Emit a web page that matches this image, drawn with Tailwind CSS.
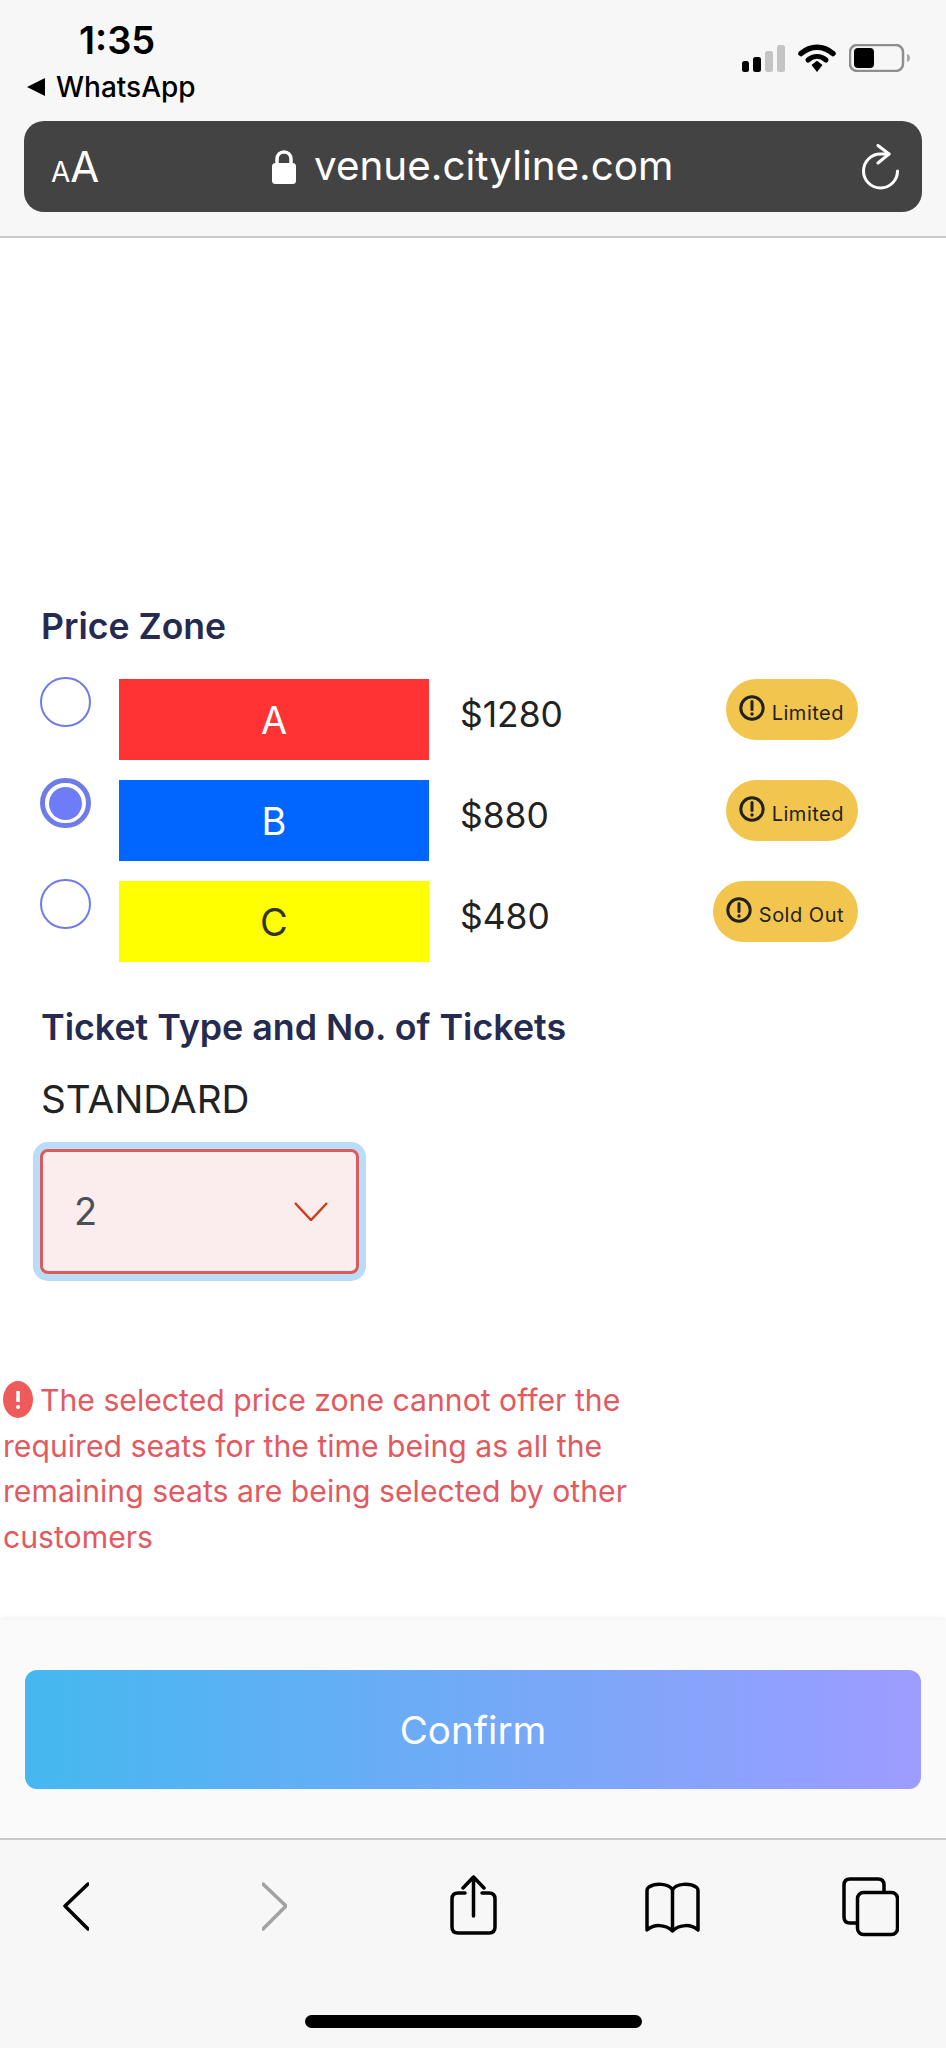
<!DOCTYPE html>
<html lang="en">
<head>
  <meta charset="UTF-8" />
  <title>Cityline</title>
  <script src="https://cdn.jsdelivr.net/npm/@tailwindcss/browser@4"></script>
</head>
<body class="bg-white text-[#222] font-['Inter',sans-serif]">
  <div class="w-[946px] h-[2048px] flex flex-col overflow-hidden">

    <!-- status bar + url bar -->
    <header class="h-[238px] shrink-0 bg-[#f7f7f7] border-b-2 border-[#c9c9c9]">
      <div class="h-[121px] flex justify-between">
        <div class="pt-[21px]">
          <div class="pl-[79px] text-[38px] leading-[38px] font-semibold text-black">1:35</div>
          <div class="mt-[14px] pl-[27px] flex items-center gap-[11px] h-[28px]">
            <svg width="18" height="18" viewBox="0 0 18 18"><path d="M18 0V18L0 9Z" fill="#000"/></svg>
            <span class="text-[28px] leading-[28px] font-medium text-black">WhatsApp</span>
          </div>
        </div>
        <div class="pt-[44px] pr-[36px] flex items-start gap-[13px]">
          <svg width="43" height="28" viewBox="0 0 43 28">
            <rect x="0" y="17" width="7" height="11" rx="2.500" fill="#000"/>
            <rect x="11" y="13" width="8" height="15" rx="2.500" fill="#000"/>
            <rect x="23" y="7" width="8" height="21" rx="2.500" fill="#c4c4c4"/>
            <rect x="35" y="1" width="8" height="27" rx="2.500" fill="#c4c4c4"/>
          </svg>
          <svg width="38" height="28" viewBox="0 0 38 28">
            <path d="M3 9.5C12.5 1 25.5 1 35 9.5" fill="none" stroke="#000" stroke-width="5.5" stroke-linecap="round"/>
            <path d="M10 16C15.5 11.2 22.5 11.2 28 16" fill="none" stroke="#000" stroke-width="5" stroke-linecap="round"/>
            <path d="M13.5 21 19 16.8 24.500 21 19 28Z" fill="#000"/>
          </svg>
          <svg width="61" height="28" viewBox="0 0 61 28">
            <rect x="1" y="1" width="53" height="26" rx="7" fill="none" stroke="#8e8e8e" stroke-width="2.500"/>
            <rect x="5" y="4" width="20" height="20" rx="4" fill="#000"/>
            <path d="M58 10C60 10.500 61 12 61 14C61 16 60 17.500 58 18Z" fill="#a8a8a8"/>
          </svg>
        </div>
      </div>
      <div class="mx-[24px] h-[91px] rounded-[20px] bg-[#434343] flex items-center relative text-white">
        <div class="w-[248px] pl-[27px] flex items-baseline">
          <span class="text-[28px] leading-none">A</span><span class="text-[42px] leading-none">A</span>
        </div>
        <svg width="24" height="34" viewBox="0 0 24 34">
          <path d="M5 15V9.500C5 5 8 2 12 2C16 2 19 5 19 9.500V15" fill="none" stroke="#fff" stroke-width="3.500"/>
          <rect x="0" y="13" width="24" height="21" rx="3.500" fill="#fff"/>
        </svg>
        <span class="ml-[18px] text-[40.400px] leading-none">venue.cityline.com</span>
        <svg class="absolute right-[23px] top-[23px]" width="38" height="46" viewBox="0 0 38 46">
          <path d="M28 10H19.500A17 17 0 1 0 36.500 27" fill="none" stroke="#fff" stroke-width="3" stroke-linecap="round"/>
          <path d="M17 1.500 28 10 17 19" fill="none" stroke="#fff" stroke-width="3" stroke-linecap="round" stroke-linejoin="round"/>
        </svg>
      </div>
    </header>

    <main class="flex-1 pt-[369px]">
      <h2 class="pl-[41px] text-[35.600px] leading-[40px] font-semibold text-[#252b50]">Price Zone</h2>

      <div class="mt-[32px] flex flex-col gap-[20px]">
        <div class="h-[81px] flex items-start pl-[40px]">
          <span class="mt-[-2px] w-[51px] h-[50px] shrink-0 rounded-full border-[2.5px] border-[#6f7ce8]"></span>
          <div class="ml-[28px] w-[310px] h-[81px] pt-[2px] bg-[#ff3333] text-white text-[38px] flex items-center justify-center">A</div>
          <div class="ml-[31px] h-[72px] flex items-center text-[35.400px]">$1280</div>
          <div class="ml-auto mr-[88px] h-[61px] pl-[13px] pr-[14px] rounded-full bg-[#f2c64e] flex items-center gap-[7px]">
            <svg class="mt-[-3px]" width="26" height="26" viewBox="0 0 26 26"><circle cx="13" cy="13" r="11.200" fill="none" stroke="#222" stroke-width="3"/><path d="M13 6.500V14.500" stroke="#222" stroke-width="3" stroke-linecap="round"/><circle cx="13" cy="19" r="1.700" fill="#222"/></svg>
            <span class="mt-[7px] text-[20px] tracking-[0.5px]">Limited</span>
          </div>
        </div>

        <div class="h-[81px] flex items-start pl-[40px]">
          <span class="mt-[-2px] w-[51px] h-[50px] shrink-0 rounded-full border-[5px] border-[#6f7ce8] flex items-center justify-center"><span class="w-[33px] h-[33px] rounded-full bg-[#6f7cf8]"></span></span>
          <div class="ml-[28px] w-[310px] h-[81px] pt-[2px] bg-[#0066ff] text-white text-[38px] flex items-center justify-center">B</div>
          <div class="ml-[31px] h-[72px] flex items-center text-[35.400px]">$880</div>
          <div class="ml-auto mr-[88px] h-[61px] pl-[13px] pr-[14px] rounded-full bg-[#f2c64e] flex items-center gap-[7px]">
            <svg class="mt-[-3px]" width="26" height="26" viewBox="0 0 26 26"><circle cx="13" cy="13" r="11.200" fill="none" stroke="#222" stroke-width="3"/><path d="M13 6.500V14.500" stroke="#222" stroke-width="3" stroke-linecap="round"/><circle cx="13" cy="19" r="1.700" fill="#222"/></svg>
            <span class="mt-[7px] text-[20px] tracking-[0.5px]">Limited</span>
          </div>
        </div>

        <div class="h-[81px] flex items-start pl-[40px]">
          <span class="mt-[-2px] w-[51px] h-[50px] shrink-0 rounded-full border-[2.5px] border-[#6f7ce8]"></span>
          <div class="ml-[28px] w-[310px] h-[81px] pt-[2px] bg-[#ffff00] text-[#333] text-[38px] flex items-center justify-center">C</div>
          <div class="ml-[31px] h-[72px] flex items-center text-[35.400px]">$480</div>
          <div class="ml-auto mr-[88px] h-[61px] pl-[13px] pr-[14px] rounded-full bg-[#f2c64e] flex items-center gap-[7px]">
            <svg class="mt-[-3px]" width="26" height="26" viewBox="0 0 26 26"><circle cx="13" cy="13" r="11.200" fill="none" stroke="#222" stroke-width="3"/><path d="M13 6.500V14.500" stroke="#222" stroke-width="3" stroke-linecap="round"/><circle cx="13" cy="19" r="1.700" fill="#222"/></svg>
            <span class="mt-[7px] text-[20px] tracking-[0.5px]">Sold Out</span>
          </div>
        </div>
      </div>

      <h2 class="mt-[45px] pl-[41px] text-[35.800px] leading-[40px] font-semibold text-[#252b50]">Ticket Type and No. of Tickets</h2>
      <p class="mt-[30px] pl-[41px] text-[38.700px] leading-[44px] text-[#222]">STANDARD</p>

      <div class="mt-[28px] ml-[40px] w-[319px] h-[125px] rounded-[8px] border-[3px] border-[#d95c5c] bg-[#fbeded] ring-[7px] ring-[#bbdcf9] flex items-center justify-between pl-[31px] pr-[28px]">
        <span class="text-[38px] text-[#4b4f56]">2</span>
        <svg width="34" height="19" viewBox="0 0 34 19"><path d="M1 1 17 18 33 1" fill="none" stroke="#c9401a" stroke-width="2.500"/></svg>
      </div>

      <p class="mt-[104px] pl-[3px] w-[640px] text-[30.200px] leading-[45.500px] text-[#e25a60]">
        <svg class="inline align-[-7px] mr-[7px]" width="30" height="37" viewBox="0 0 30 37"><ellipse cx="15" cy="18.500" rx="15" ry="18.500" fill="#ef5b5b"/><path d="M15 10V21" stroke="#fff" stroke-width="3.500"/><circle cx="15" cy="26" r="2" fill="#fff"/></svg>The selected price zone cannot offer the required seats for the time being as all the remaining seats are being selected by other customers
      </p>
    </main>

    <!-- confirm -->
    <section class="h-[218px] shrink-0 bg-[#fafafa] shadow-[0_-2px_5px_rgba(0,0,0,0.06)] px-[25px] pt-[50px]">
      <button class="w-full h-[119px] pt-[2px] rounded-[12px] bg-linear-to-r/srgb from-[#45b8f0] to-[#9e9cff] text-white text-[38.600px]">Confirm</button>
    </section>

    <!-- safari toolbar -->
    <nav class="h-[210px] shrink-0 bg-[#f7f7f7] border-t-2 border-[#c9c9c9] pt-[35px] relative">
      <div class="flex items-start">
        <svg class="ml-[63px]" width="26" height="62" viewBox="0 0 26 62"><path d="M25 9 2 31 25 54" fill="none" stroke="#000" stroke-width="3.500" stroke-linecap="round" stroke-linejoin="round"/></svg>
        <svg class="ml-[173px]" width="25" height="62" viewBox="0 0 25 62"><path d="M1 9 24 31 1 54" fill="none" stroke="#a2a2a2" stroke-width="3.500" stroke-linecap="round" stroke-linejoin="round"/></svg>
        <svg class="ml-[163px]" width="47" height="62" viewBox="0 0 47 62"><path d="M15 18H8C4 18 2 20 2 24V52C2 56 4 58 8 58H39C43 58 45 56 45 52V24C45 20 43 18 39 18H32" fill="none" stroke="#000" stroke-width="3.500" stroke-linecap="round"/><path d="M23.500 41V2M13 13 23.500 2 34 13" fill="none" stroke="#000" stroke-width="3.500" stroke-linecap="round" stroke-linejoin="round"/></svg>
        <svg class="ml-[148px]" width="55" height="62" viewBox="0 0 55 62"><path d="M27.500 15C24 8 10 8 4 12C2 13 2 14 2 16V55C9 49 20 49 27.500 56C35 49 46 49 53 55V16C53 14 53 13 51 12C45 8 31 8 27.500 15ZM27.500 15V56" fill="none" stroke="#000" stroke-width="3.500" stroke-linejoin="round"/></svg>
        <svg class="ml-[142px]" width="57" height="62" viewBox="0 0 57 62"><path d="M14 48H8C4 48 2 46 2 42V10C2 6 4 4 8 4H36C40 4 42 6 42 10V16" fill="none" stroke="#000" stroke-width="3.500"/><rect x="15.500" y="17.500" width="40" height="42" rx="6" fill="none" stroke="#000" stroke-width="3.500"/></svg>
      </div>
      <div class="absolute left-[305px] top-[175px] w-[337px] h-[13px] rounded-full bg-black"></div>
    </nav>
  </div>
</body>
</html>
